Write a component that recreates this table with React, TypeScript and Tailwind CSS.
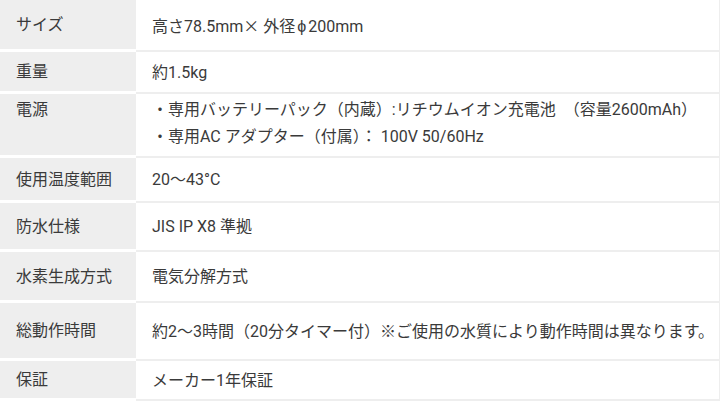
import type { ReactNode } from 'react';

interface SpecRow {
  label: string;
  height: string;
  top?: boolean;
  value: ReactNode;
}

const cjk = "font-['Noto_Sans_CJK_JP',sans-serif]";

const rows: SpecRow[] = [
  {
    label: 'サイズ',
    height: 'h-[52px]',
    value: (
      <span>
        高さ78.5mm<span className={cjk}>×</span> 外径
        <span className="font-['Noto_Sans_CJK_JP',sans-serif] px-[2px]">ϕ</span>200mm
      </span>
    ),
  },
  { label: '重量', height: 'h-[42px]', value: '約1.5kg' },
  {
    label: '電源',
    height: 'h-[64px]',
    top: true,
    value: (
      <>
        <p>・専用バッテリーパック（内蔵）:リチウムイオン充電池　（容量2600mAh）</p>
        <p>・専用AC アダプター（付属）： 100V 50/60Hz</p>
      </>
    ),
  },
  { label: '使用温度範囲', height: 'h-[45px]', value: '20〜43°C' },
  { label: '防水仕様', height: 'h-[49px]', value: 'JIS IP X8 準拠' },
  { label: '水素生成方式', height: 'h-[51px]', value: '電気分解方式' },
  {
    label: '総動作時間',
    height: 'h-[58px]',
    value: '約2〜3時間（20分タイマー付）※ご使用の水質により動作時間は異なります。',
  },
  { label: '保証', height: 'h-[40px]', value: 'メーカー1年保証' },
];

export default function App() {
  return (
    <div className="w-[720px] h-[401px] overflow-hidden bg-white font-['Roboto','Noto_Sans_CJK_JP',sans-serif] text-[16px] text-[#3a3a3a]">
      {rows.map((row) => (
        <div key={row.label} className={`grid grid-cols-[136px_1fr] ${row.height}`}>
          {/* label cell */}
          <div
            className={`flex bg-[#eeeeee] border-b-[3px] border-white pl-4 ${
              row.top ? 'items-start pt-[2px] leading-[27px]' : 'items-center pt-px'
            }`}
          >
            {row.label}
          </div>

          {/* value cell */}
          <div
            className={`flex flex-col bg-white border-b-2 border-r border-[#eeeeee] pl-4 ${
              row.top ? 'justify-start pt-[2px] leading-[27px]' : 'justify-center pt-px'
            }`}
          >
            {row.value}
          </div>
        </div>
      ))}
    </div>
  );
}
